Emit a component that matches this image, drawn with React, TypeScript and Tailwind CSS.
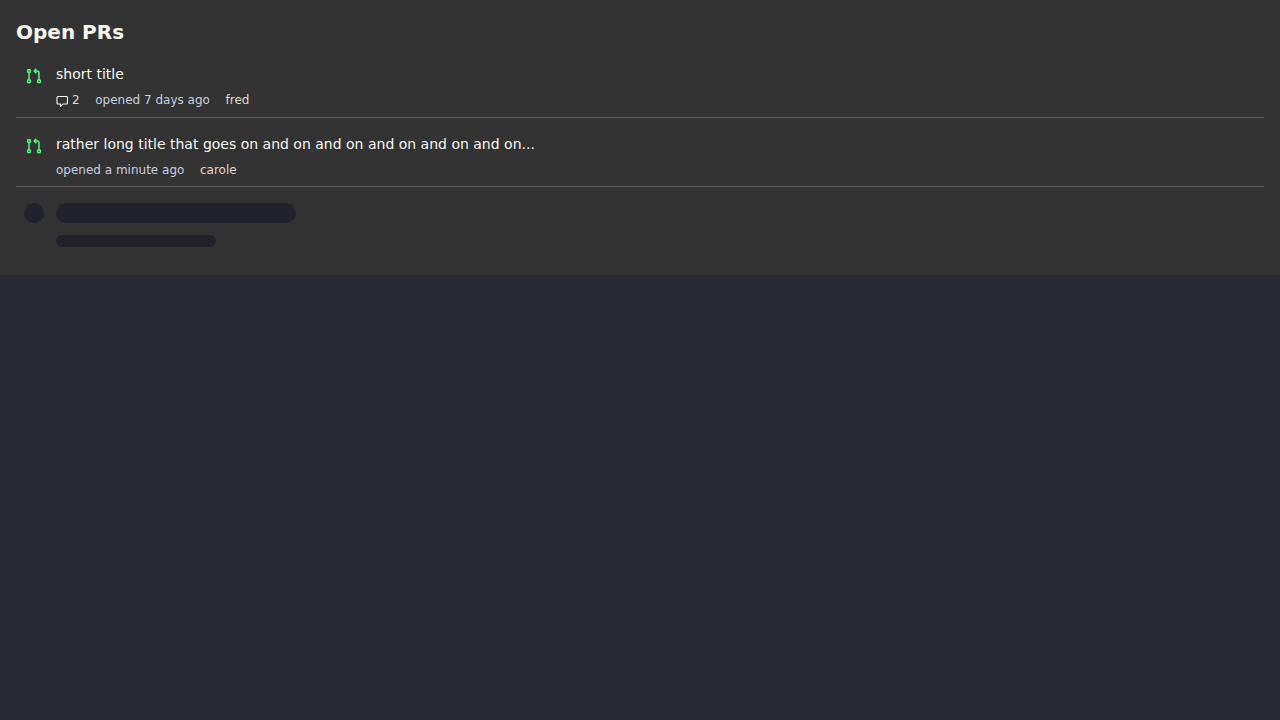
import React from "react";

const PrIcon = () => (
  <svg width="20" height="20" viewBox="0 0 20 20" fill="none" stroke="#50fa7b" strokeWidth="1.5" className="shrink-0">
    <circle cx="5" cy="5" r="1.5" />
    <circle cx="5" cy="15.2" r="1.5" />
    <circle cx="15" cy="15.2" r="1.5" />
    <path d="M5 6.5V13.7" />
    <path d="M15 13.7V7C15 5.7 14.3 5 13 5H10.5" />
    <path d="M12.3 2.9L10.2 5L12.3 7.1" />
  </svg>
);

const CommentIcon = () => (
  <svg width="12" height="12" viewBox="0 0 12 12" fill="none" stroke="#f8f8f2" strokeWidth="1.1" className="mt-[1px]">
    <path d="M2 1.5H10.5C11 1.5 11.5 2 11.5 2.5V8C11.5 8.5 11 9 10.5 9H7L4.5 11.4V9H2C1.5 9 1 8.5 1 8V2.5C1 2 1.5 1.5 2 1.5Z" />
  </svg>
);

interface PrRowProps {
  title: string;
  opened: string;
  author: string;
  comments?: number;
}

const PrRow = ({ title, opened, author, comments }: PrRowProps) => (
  <div className="flex h-[69.5px] border-b border-[#565656] pl-2 pt-[18px]">
    <PrIcon />
    <div className="ml-3 min-w-0">
      <div className="text-sm leading-4 text-[#f8f8f2]">{title}</div>
      <div className="mt-[10px] flex h-4 items-center gap-[15.6px] text-xs leading-4">
        {comments !== undefined && (
          <span className="flex items-center gap-1 text-[#d5dae4]">
            <CommentIcon />
            {comments}
          </span>
        )}
        <span className="text-[#c6d0e0]">{opened}</span>
        <span className="text-[#e0d8c8]">{author}</span>
      </div>
    </div>
  </div>
);

export default function App() {
  return (
    <div className="min-h-screen bg-[#282a36] font-['DejaVu_Sans',sans-serif]">
      <section className="h-[275px] bg-[#333333] px-4 pt-4">
        <h2 className="text-xl font-bold leading-8 text-[#f8f8f2]">Open PRs</h2>
        <div>
          <PrRow title="short title" opened="opened 7 days ago" author="fred" comments={2} />
          <PrRow
            title="rather long title that goes on and on and on and on and on and on..."
            opened="opened a minute ago"
            author="carole"
          />
          <div className="flex pl-2 pt-4">
            <div className="h-5 w-5 rounded-full bg-[#21222c]" />
            <div className="ml-3">
              <div className="h-5 w-60 rounded-[10px] bg-[#21222c]" />
              <div className="mt-3 h-3 w-40 rounded-md bg-[#21222c]" />
            </div>
          </div>
        </div>
      </section>
    </div>
  );
}
